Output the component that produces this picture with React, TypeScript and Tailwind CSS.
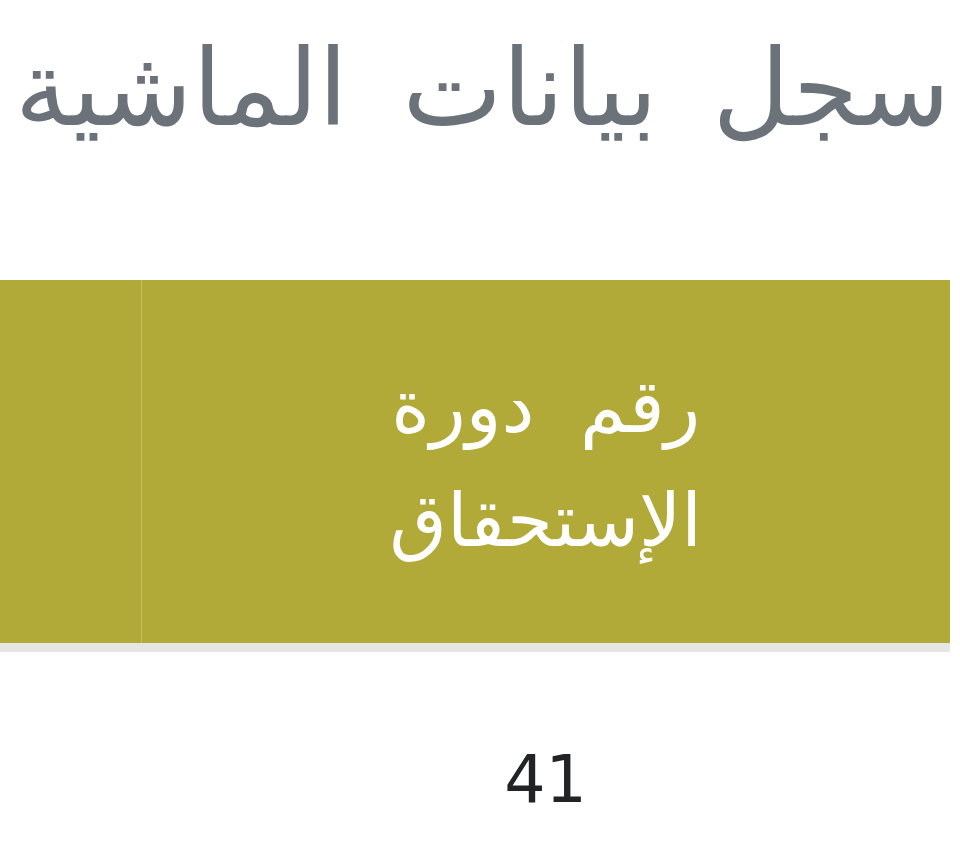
export default function App() {
  return (
    <div dir="rtl" className="min-h-screen bg-white" style={{ fontFamily: '"DejaVu Sans", "Noto Sans", sans-serif' }}>
      <h1 className="pr-[10px] pt-[14px] text-[106px] leading-[150px] font-normal text-[#6c727a] [word-spacing:21px]">
        سجل بيانات الماشية
      </h1>

      <div className="mt-[116px] mr-[10px]">
        <table className="w-full border-collapse">
          <thead>
            <tr className="h-[367px] bg-[#b2aa38] border-b-[9px] border-[#e6e6e4]">
              <th className="w-[809px] px-6 pt-1 text-center text-[74px] leading-[114px] font-normal text-white [word-spacing:22px]">
                رقم دورة
                <br />
                الإستحقاق
              </th>
              <th className="border-r border-[#c6be55]"></th>
            </tr>
          </thead>
          <tbody>
            <tr>
              <td className="pt-[92px] text-center text-[65px] leading-[72px] text-[#222324]">41</td>
              <td></td>
            </tr>
          </tbody>
        </table>
      </div>
    </div>
  );
}
